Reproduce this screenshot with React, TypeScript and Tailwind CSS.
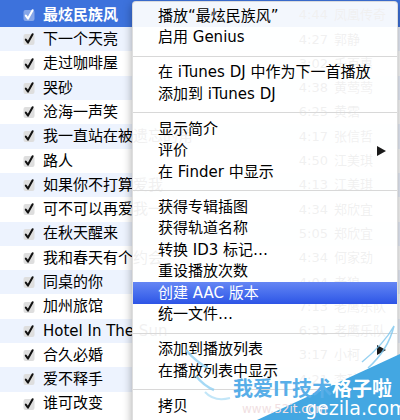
const FONT = '"DejaVu Sans", "Noto Sans CJK SC", sans-serif';

const rows: [string, string, string][] = [
  ["最炫民族风", "4:44", "凤凰传奇"],
  ["下一个天亮", "4:27", "郭静"],
  ["走过咖啡屋", "3:02", "千百惠"],
  ["哭砂", "4:38", "黄莺莺"],
  ["沧海一声笑", "6:25", "黄霑"],
  ["我一直站在被遗忘的角落", "4:17", "张信哲"],
  ["路人", "4:50", "江美琪"],
  ["如果你不打算爱我", "4:13", "江美琪"],
  ["可不可以再爱我一次", "4:34", "郑欣宜"],
  ["在秋天醒来", "5:05", "郑欣宜"],
  ["我和春天有个约会", "4:34", "何家劲"],
  ["同桌的你", "4:04", "老狼"],
  ["加州旅馆", "7:13", "老鹰乐队"],
  ["Hotel In The Sun", "6:31", "老鹰乐队"],
  ["合久必婚", "3:17", "小柯"],
  ["爱不释手", "4:21", "李玟"],
  ["谁可改变", "4:09", "李克勤"],
];

function Check({ selected }: { selected: boolean }) {
  return (
    <svg width="13" height="14" viewBox="0 0 13 14" className="shrink-0">
      <rect x="0.5" y="2" width="11" height="11" rx="2" fill={selected ? "#86a6e8" : "#dedede"} />
      <path
        d="M2.8 7.6 L5 10.6 L9.6 2.2"
        fill="none"
        stroke={selected ? "#ffffff" : "#111111"}
        strokeWidth="2"
        strokeLinecap="round"
        strokeLinejoin="round"
      />
    </svg>
  );
}

function Row({ r, i }: { r: [string, string, string]; i: number }) {
  const selected = i === 0;
  const bg = selected ? "bg-[#3d72dc]" : i % 2 === 1 ? "bg-[#edf3fe]" : "bg-white";
  const inner = (
    <div className="flex items-center h-[24.3px]">
      <div className="w-[23px] shrink-0" />
      <Check selected={selected} />
      <div
        className={`ml-[7px] w-[150px] shrink-0 overflow-hidden whitespace-nowrap text-[15px] ${
          selected ? "text-white font-bold" : "text-black"
        }`}
      >
        {r[0]}
      </div>
      <div className="w-[135px] shrink-0 text-right text-[13px] text-black">{r[1]}</div>
      <div className="ml-[6px] whitespace-nowrap text-[13px] text-black">{r[2]}</div>
    </div>
  );
  if (i === 0) {
    return <div className={`${bg} h-[27.15px] pt-[2.85px]`}>{inner}</div>;
  }
  return <div className={bg}>{inner}</div>;
}

function Arrow() {
  return (
    <svg width="9" height="10" viewBox="0 0 9 10" className="ml-auto">
      <path d="M0 0 L9 5 L0 10 Z" fill="#1a1a1a" />
    </svg>
  );
}

type Item = { t: string; arrow?: boolean; hl?: boolean } | "sep";

const items: Item[] = [
  { t: "播放“最炫民族风”" },
  { t: "启用 Genius" },
  "sep",
  { t: "在 iTunes DJ 中作为下一首播放" },
  { t: "添加到 iTunes DJ" },
  "sep",
  { t: "显示简介" },
  { t: "评价", arrow: true },
  { t: "在 Finder 中显示" },
  "sep",
  { t: "获得专辑插图" },
  { t: "获得轨道名称" },
  { t: "转换 ID3 标记…" },
  { t: "重设播放次数" },
  { t: "创建 AAC 版本", hl: true },
  { t: "统一文件…" },
  "sep",
  { t: "添加到播放列表", arrow: true },
  { t: "在播放列表中显示" },
  "sep",
  { t: "拷贝" },
];

function Menu() {
  return (
    <div className="absolute left-[132px] top-[1px] w-[266px] h-[440px] rounded-t-[4px] bg-white/[0.94] pt-[3.25px] shadow-[0_3px_10px_rgba(0,0,0,0.35)] border border-[#c8c8c8]/60">
      {items.map((it, idx) =>
        it === "sep" ? (
          <div key={idx} className="h-[13.5px] pt-[7.5px]">
            <div className="h-px bg-[#d8d8d8]" />
          </div>
        ) : (
          <div
            key={idx}
            className={`flex items-center h-[21.5px] pl-[25px] pr-[11px] text-[15px] whitespace-nowrap ${
              it.hl ? "bg-gradient-to-b from-[#6586f4] to-[#2d54e6] text-white" : "text-black"
            }`}
          >
            {it.t}
            {it.arrow && <Arrow />}
          </div>
        )
      )}
    </div>
  );
}

function Watermark() {
  return (
    <div className="absolute inset-0 pointer-events-none">
      <svg width="400" height="420" className="absolute left-0 top-0">
        <polygon points="257,420 400,354 400,420" fill="#43a7e2" />
        <path d="M186 350 Q196 362 208 368" fill="none" stroke="#8fd0f2" strokeWidth="2.5" opacity="0.8" />
        <path d="M196 376 Q204 386 214 390" fill="none" stroke="#8fd0f2" strokeWidth="2.5" opacity="0.8" />
        <path d="M205 392 Q214 402 230 398" fill="none" stroke="#a8dcf5" strokeWidth="2" opacity="0.7" />
        <path d="M362 362 Q384 344 394 326 Q388 350 368 368" fill="none" stroke="#7cc6ee" strokeWidth="1.5" opacity="0.8" />
      </svg>
      <div
        className="absolute left-[233px] top-[378px] text-[20px] font-bold leading-none whitespace-nowrap"
        style={{ fontFamily: '"Noto Sans CJK SC", "DejaVu Sans", sans-serif' }}
      >
        <span className="text-[#58aee8]">我爱IT技术</span>
        <span className="text-white">格子啦</span>
      </div>
      <div className="absolute left-[242px] top-[403px] text-[12px] text-[#f1dfe2] leading-none">www.52it.com</div>
      <div className="absolute left-[305px] top-[399px] text-[19px] text-white leading-none">gezila.com</div>
    </div>
  );
}

export default function App() {
  return (
    <div className="relative w-[400px] h-[420px] overflow-hidden bg-white" style={{ fontFamily: FONT }}>
      <div className="flex flex-col">
        {rows.map((r, i) => (
          <Row key={i} r={r} i={i} />
        ))}
      </div>
      <Menu />
      <Watermark />
    </div>
  );
}
